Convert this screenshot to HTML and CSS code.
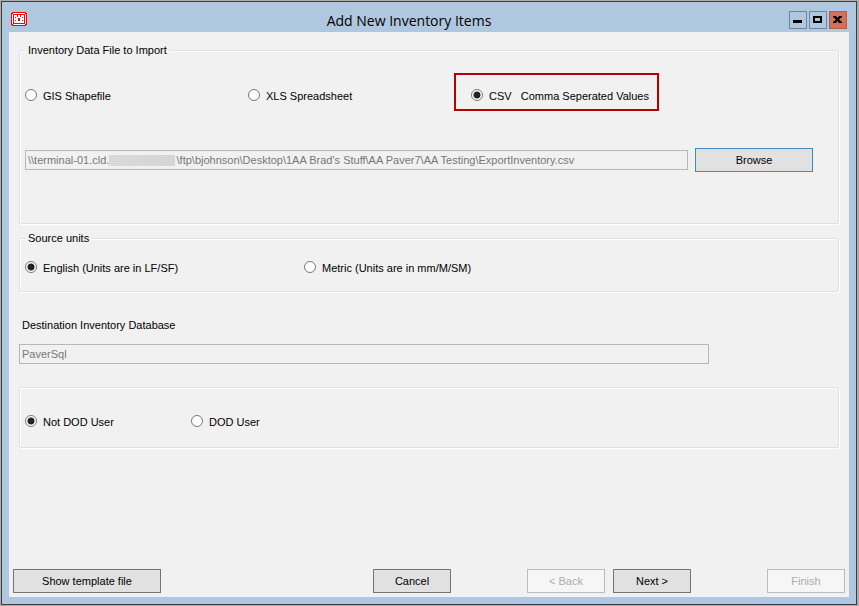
FILE: index.html
```html
<!DOCTYPE html>
<html lang="en">

<head>
  <meta charset="utf-8">
  <meta name="viewport" content="width=device-width, initial-scale=1.0">
  <title>Add New Inventory Items</title>
  <link rel="stylesheet" href="styles.css">
</head>

<body>
  <div class="window">
    <header class="titlebar">
      <svg class="app-icon" width="16" height="14" viewBox="0 0 16 14" shape-rendering="crispEdges">
        <path fill="#f00" d="M1 0h14v1h1v12h-1v1H1v-1H0V1h1z" />
        <path fill="#fff" d="M2 1h12v1h1v10h-1v1H2v-1H1V2h1z" />
        <path fill="#f00" d="M2 2h12v10H2z" />
        <path fill="#fff" d="M3 3h10v8H3z" />
        <path fill="#f00" d="M6 3h1v2H6zM9 3h1v2H9zM4 5h1v1H4zM11 5h1v1h-1zM4 8h1v1H4zM11 8h1v1h-1zM7 6h2v3H7z" />
      </svg>
      <h1>Add New Inventory Items</h1>
      <div class="window-buttons">
        <button type="button" aria-label="Minimize">
          <svg width="16" height="16" viewBox="0 0 16 16"><path d="M3 8h9v3H3z" /></svg>
        </button>
        <button type="button" aria-label="Maximize">
          <svg width="16" height="16" viewBox="0 0 16 16"><path fill-rule="evenodd" d="M3 4h9v7H3zM5 6v3h5V6z" /></svg>
        </button>
        <button type="button" class="close" aria-label="Close">
          <svg width="16" height="16" viewBox="0 0 16 16"><path d="M3 4h3l1.500 2L9 4h3v1L9 7.500 12 10v1H9L7.500 9 6 11H3v-1l3-2.500L3 5z" /></svg>
        </button>
      </div>
    </header>

    <form class="panel">
      <fieldset class="group file-group">
        <legend>Inventory Data File to Import</legend>
        <div class="options options-file">
          <label class="option"><input type="radio" name="format"> GIS Shapefile</label>
          <label class="option"><input type="radio" name="format"> XLS Spreadsheet</label>
          <label class="option highlight"><input type="radio" name="format" checked> CSV&nbsp;&nbsp; Comma Seperated Values</label>
        </div>
        <div class="file-row">
          <div class="path">
            <input type="text" class="field" aria-label="File path" disabled value="\\terminal-01.cld.&nbsp;&nbsp;&nbsp;&nbsp;&nbsp;&nbsp;&nbsp;&nbsp;&nbsp;&nbsp;&nbsp;&nbsp;&nbsp;&nbsp;&nbsp;&nbsp;&nbsp;&nbsp;&nbsp;&nbsp;&nbsp;&nbsp;\ftp\bjohnson\Desktop\1AA Brad's Stuff\AA Paver7\AA Testing\ExportInventory.csv">
            <span class="mask"></span>
          </div>
          <button type="button" class="btn browse">Browse</button>
        </div>
      </fieldset>

      <fieldset class="group units-group">
        <legend>Source units</legend>
        <div class="options options-units">
          <label class="option"><input type="radio" name="units" checked> English (Units are in LF/SF)</label>
          <label class="option"><input type="radio" name="units"> Metric (Units are in mm/M/SM)</label>
        </div>
      </fieldset>

      <div class="database">
        <label for="database">Destination Inventory Database</label>
        <input type="text" class="field" id="database" disabled value="PaverSql">
      </div>

      <fieldset class="group user-group" aria-label="User type">
        <div class="options options-user">
          <label class="option"><input type="radio" name="user" checked> Not DOD User</label>
          <label class="option"><input type="radio" name="user"> DOD User</label>
        </div>
      </fieldset>

      <footer class="actions">
        <button type="button" class="btn template">Show template file</button>
        <button type="button" class="btn">Cancel</button>
        <div class="steps">
          <button type="button" class="btn" disabled>&lt; Back</button>
          <button type="button" class="btn">Next &gt;</button>
        </div>
        <button type="button" class="btn" disabled>Finish</button>
      </footer>
    </form>
  </div>
</body>

</html>
```

FILE: styles.css
```css
* {
  box-sizing: border-box;
}

body {
  margin: 0;
  padding: 1px 2px 1px 1px;
  min-height: 100vh;
  display: flex;
  background: #adadad;
  color: #000;
  font: 11px/16px "Liberation Sans", Arial, sans-serif;
}

/* window frame */
.window {
  flex: 1;
  display: flex;
  flex-direction: column;
  padding: 0 7px 7px;
  border: 1px solid #3c3c3c;
  background: #b0c7e0;
}

.titlebar {
  display: grid;
  grid-template-columns: 20px 1fr 60px;
  height: 30px;
  padding: 9px 2px 0;
}

.app-icon {
  margin-top: 1px;
}

h1 {
  margin: 0;
  font: 14px/20px "Open Sans", "Segoe UI", sans-serif;
  text-align: center;
}

.window-buttons {
  display: flex;
  justify-content: flex-end;
  gap: 2px;
}

.window-buttons button {
  width: 18px;
  height: 18px;
  padding: 0;
  border: 1px solid #6f87a3;
  background: none;
}

.window-buttons svg {
  display: block;
}

.window-buttons .close {
  border-color: #bd5b47;
  background: #d4705a;
}

.panel {
  flex: 1;
  display: flex;
  flex-direction: column;
  padding: 10px 4px 4px;
  background: #f1f1f1;
}

/* group boxes */
.group {
  min-width: 0;
  margin: 0 6px;
  padding: 0 5px;
  border: 1px solid #dce2e4;
  border-radius: 2px;
  box-shadow: 1px 1px 0 #fff, inset 1px 1px 0 #fff;
}

.group legend {
  padding: 0 3px;
  background: #f1f1f1;
}

.file-group {
  padding-top: 15px;
  padding-bottom: 51px;
}

.units-group {
  margin-top: 6px;
  padding-top: 14px;
  padding-bottom: 15px;
}

.user-group {
  margin-top: 23px;
  padding-top: 26px;
  padding-bottom: 17px;
}

.options {
  display: grid;
  align-items: baseline;
  white-space: nowrap;
}

.options-file {
  grid-template-columns: 223px 206px 205px;
}

.options-units {
  grid-template-columns: 279px 1fr;
}

.options-user {
  grid-template-columns: 166px 1fr;
}

.option {
  display: flex;
  align-items: flex-start;
  gap: 6px;
}

.option input {
  appearance: none;
  flex: none;
  width: 12px;
  height: 12px;
  margin: 1px 0 0;
  border: 1px solid #777;
  border-radius: 50%;
  background: #fff;
}

.option input:checked {
  background: radial-gradient(circle, #222 3px, #fff 4px);
}

.highlight {
  padding: 13px 10px 5px 15px;
  border: 2px solid #b90000;
}

.field {
  display: block;
  width: 100%;
  height: 20px;
  padding: 0 2px;
  border: 1px solid #b4b8b8;
  background: #f1f1f1;
  color: #777;
  font: inherit;
}

.file-row {
  display: flex;
  align-items: center;
  gap: 7px;
  margin-top: 37px;
  padding-right: 20px;
}

.path {
  position: relative;
  flex: 1;
}

/* covers the server name */
.mask {
  position: absolute;
  top: 5px;
  left: 84px;
  width: 66px;
  height: 11px;
  background: linear-gradient(90deg, #d8d9da, #d3d5d9);
}

.database {
  margin: 25px 136px 0 6px;
}

.database label {
  display: block;
  margin: 0 3px 11px;
}

/* buttons */
.btn {
  width: 78px;
  height: 24px;
  padding: 0;
  border: 1px solid #747474;
  background: #e1e1e1;
  color: #000;
  font: inherit;
}

.btn:disabled {
  border-color: #b9bdbd;
  background: #f6f6f6;
  color: #aaa;
}

.browse {
  width: 118px;
  border-color: #4689b8;
}

.actions {
  display: flex;
  gap: 76px;
  margin-top: auto;
}

.template {
  width: 148px;
  margin-right: auto;
}

.steps {
  display: flex;
  gap: 8px;
}
```
